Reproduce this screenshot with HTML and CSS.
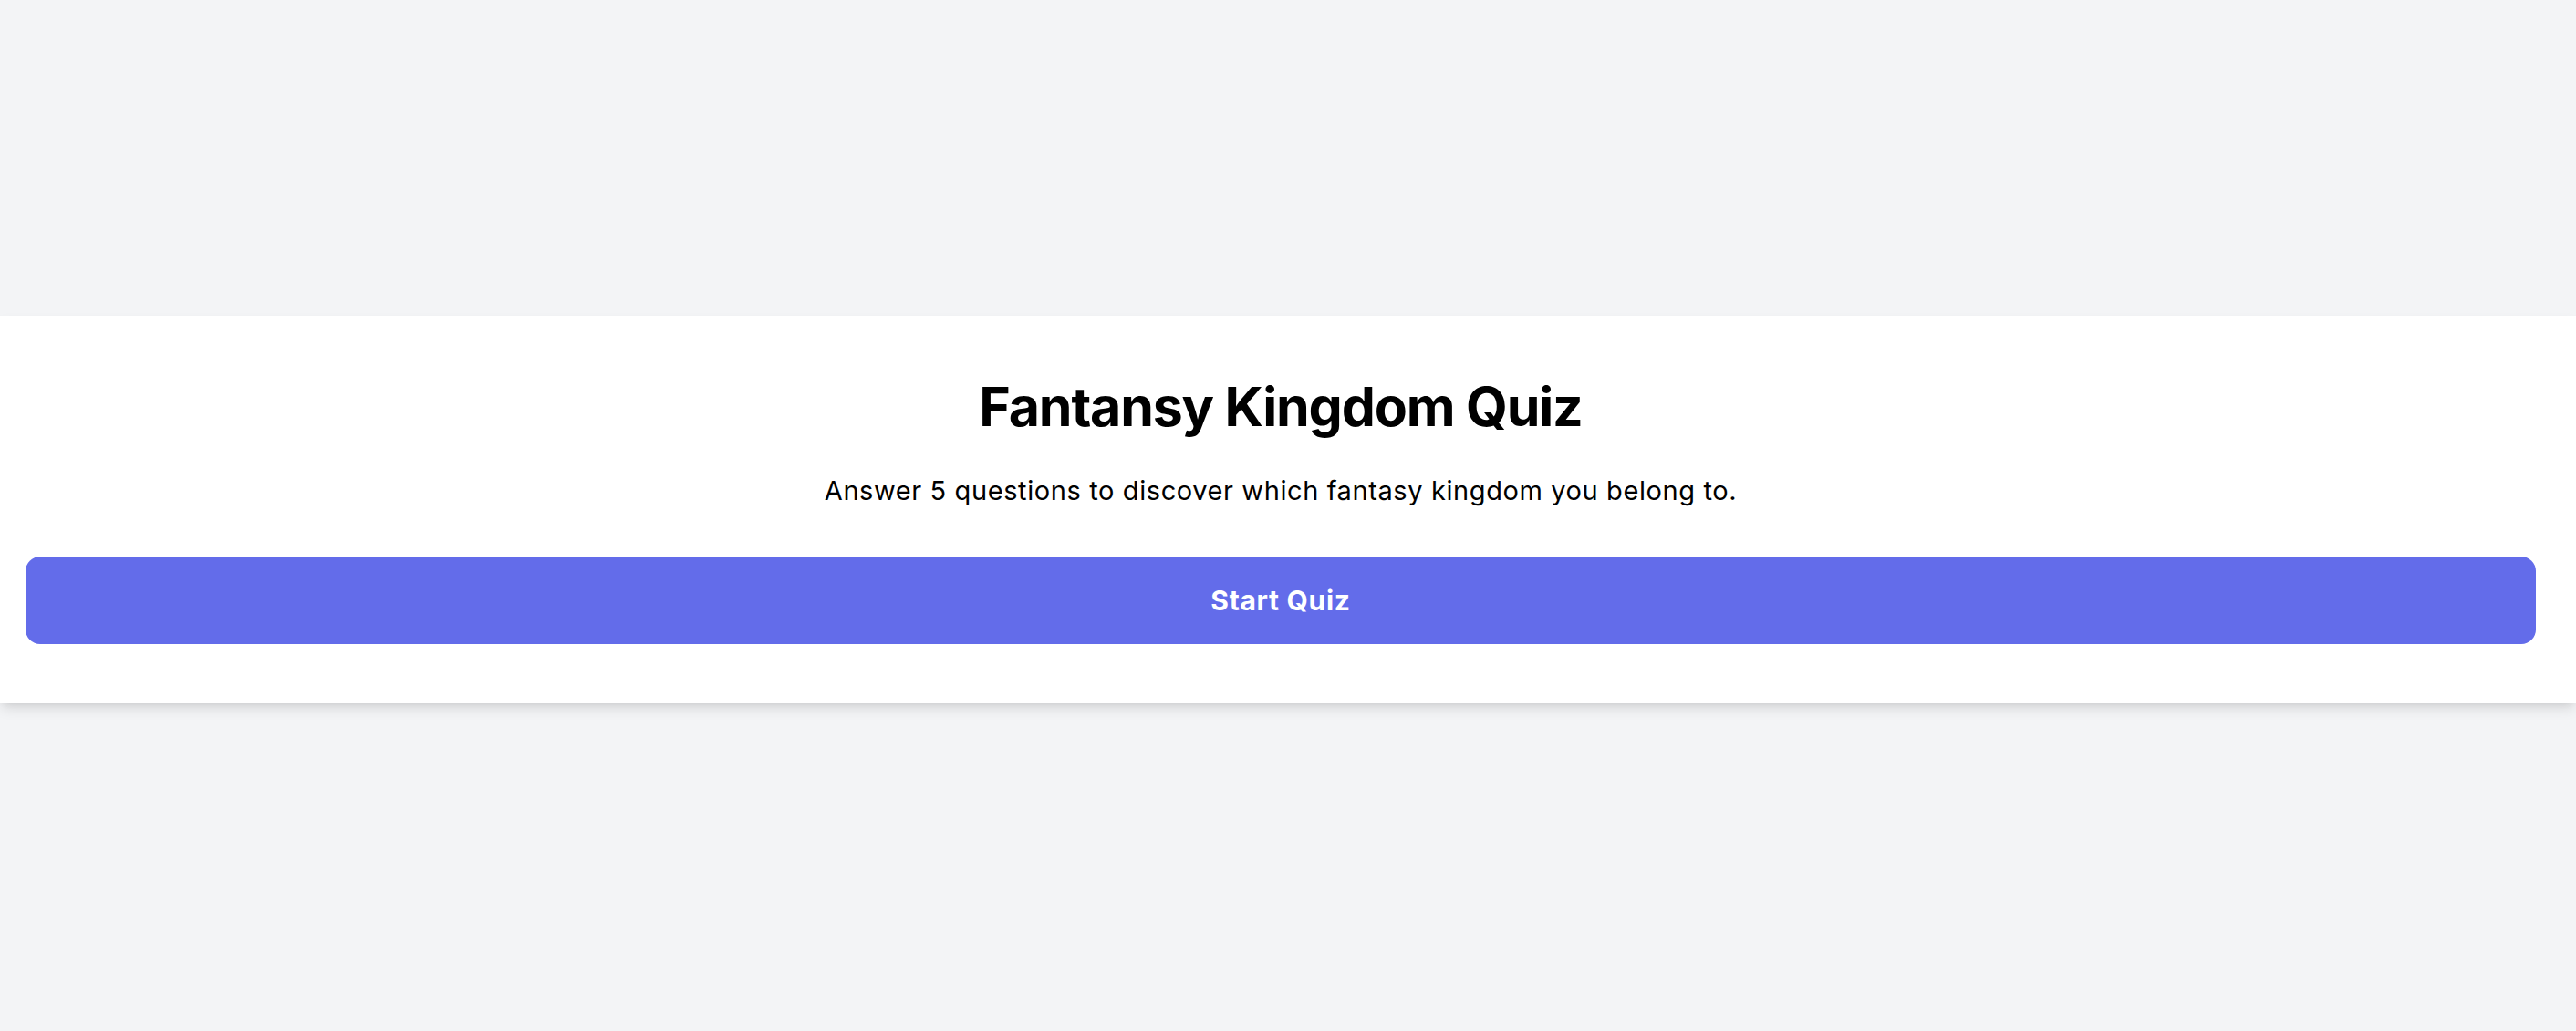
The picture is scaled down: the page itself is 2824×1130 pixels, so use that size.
FILE: index.html
```html
<!DOCTYPE html>
<html lang="en">
<head>
<meta charset="utf-8">
<title>Fantansy Kingdom Quiz</title>
<link rel="stylesheet" href="styles.css">
</head>
<body>
<main class="page">
  <section class="card">
    <h1 class="title">Fantansy Kingdom Quiz</h1>
    <p class="subtitle">Answer 5 questions to discover which fantasy kingdom you belong to.</p>
    <button class="start">Start Quiz</button>
  </section>
</main>
</body>
</html>
```

FILE: styles.css
```css
html, body {
  margin: 0;
  padding: 0;
}
body {
  background: #f3f4f6;
  font-family: Inter, "Noto Sans", sans-serif;
  color: #000;
}
.page {
  box-sizing: border-box;
  min-height: 1130px;
  padding-bottom: 14px;
  display: flex;
  flex-direction: column;
  justify-content: center;
}
.card {
  background: #fff;
  padding: 64px 44px 64px 28px;
  box-shadow: 0 8px 14px -2px rgba(0, 0, 0, 0.12), 0 4px 8px -4px rgba(0, 0, 0, 0.1);
  display: flex;
  flex-direction: column;
  align-items: center;
}
.title {
  margin: 0;
  font-size: 59px;
  line-height: 72px;
  font-weight: 700;
  letter-spacing: -1.2px;
}
.subtitle {
  margin: 36px 0 0;
  font-size: 29px;
  line-height: 40px;
  font-weight: 400;
  letter-spacing: 0.6px;
}
.start {
  margin-top: 52px;
  width: 100%;
  height: 96px;
  border: 0;
  border-radius: 16px;
  background: #636cea;
  color: #fff;
  font-family: Inter, "Noto Sans", sans-serif;
  font-size: 30px;
  font-weight: 700;
  letter-spacing: 0.7px;
  cursor: pointer;
}
```
